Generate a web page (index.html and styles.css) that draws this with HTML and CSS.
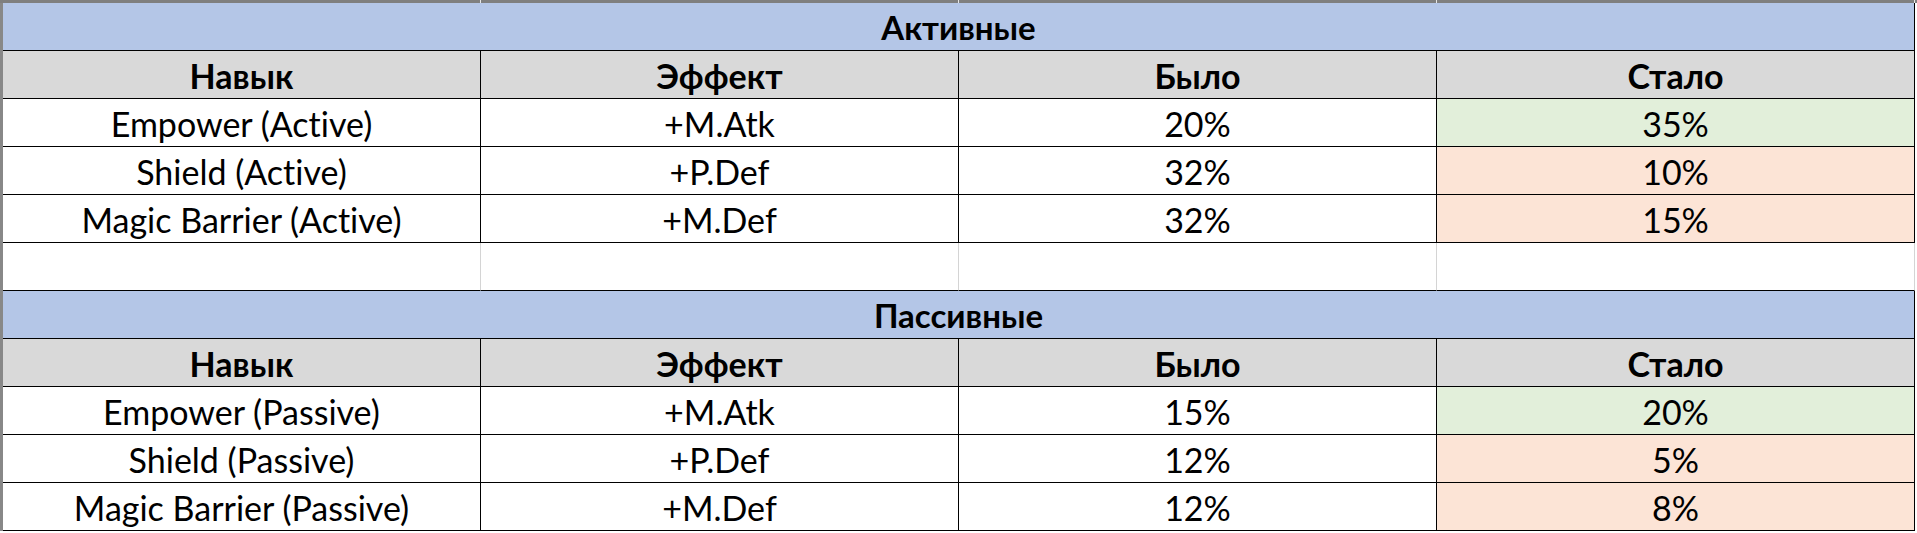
FILE: index.html
```html
<!DOCTYPE html>
<html lang="ru">
<head>
<meta charset="utf-8">
<title>Навыки</title>
<link rel="stylesheet" href="styles.css">
</head>
<body>
<div class="sheet">
  <div class="colbar">
    <span class="colbar-corner"></span>
    <span class="colbar-seg"></span>
    <span class="colbar-seg"></span>
    <span class="colbar-seg"></span>
    <span class="colbar-seg"></span>
  </div>
  <div class="body">
    <div class="rowbar"></div>
    <table class="grid">
      <colgroup>
        <col class="c"><col class="c"><col class="c"><col class="c">
      </colgroup>
      <tbody>
        <tr><td class="title" colspan="4">Активные</td></tr>
        <tr class="head"><td>Навык</td><td>Эффект</td><td>Было</td><td>Стало</td></tr>
        <tr><td>Empower (Active)</td><td>+M.Atk</td><td>20%</td><td class="up">35%</td></tr>
        <tr><td>Shield (Active)</td><td>+P.Def</td><td>32%</td><td class="down">10%</td></tr>
        <tr><td>Magic Barrier (Active)</td><td>+M.Def</td><td>32%</td><td class="down">15%</td></tr>
        <tr class="empty"><td></td><td></td><td></td><td></td></tr>
        <tr><td class="title" colspan="4">Пассивные</td></tr>
        <tr class="head"><td>Навык</td><td>Эффект</td><td>Было</td><td>Стало</td></tr>
        <tr><td>Empower (Passive)</td><td>+M.Atk</td><td>15%</td><td class="up">20%</td></tr>
        <tr><td>Shield (Passive)</td><td>+P.Def</td><td>12%</td><td class="down">5%</td></tr>
        <tr><td>Magic Barrier (Passive)</td><td>+M.Def</td><td>12%</td><td class="down">8%</td></tr>
      </tbody>
    </table>
  </div>
</div>
</body>
</html>
```

FILE: styles.css
```css
html, body {
  margin: 0;
  padding: 0;
  background: #ffffff;
}

.sheet {
  width: 1917px;
  height: 533px;
  overflow: hidden;
  font-family: "Lato", "Open Sans", sans-serif;
  font-variant-ligatures: none;
  color: #000000;
}

.colbar {
  display: flex;
  height: 3px;
  background: #7f7f7f;
}

.colbar-corner {
  width: 3px;
  flex: none;
}

.colbar-seg {
  width: 477px;
  flex: none;
  border-right: 1px solid #e6e6e6;
}

.body {
  display: flex;
}

.rowbar {
  width: 3px;
  flex: none;
  background: #888888;
}

.grid {
  border-collapse: separate;
  border-spacing: 0;
  table-layout: fixed;
  width: 1912px;
}

.grid .c {
  width: 478px;
}

.grid td {
  box-sizing: border-box;
  height: 48px;
  padding: 0 0 5px 0;
  border-right: 1px solid #000000;
  border-bottom: 1px solid #000000;
  text-align: center;
  vertical-align: bottom;
  font-size: 34px;
  line-height: 34px;
  white-space: nowrap;
}

.grid td.title {
  background: #b4c6e7;
  font-weight: 700;
  font-size: 33px;
  line-height: 34px;
  padding-bottom: 6px;
}

.grid tr.head td {
  background: #d9d9d9;
  font-weight: 700;
  font-size: 34px;
}

.grid td.up {
  background: #e2efda;
}

.grid td.down {
  background: #fce4d6;
}

.grid tr.empty td {
  border-right-color: #d4d4d4;
}
```
